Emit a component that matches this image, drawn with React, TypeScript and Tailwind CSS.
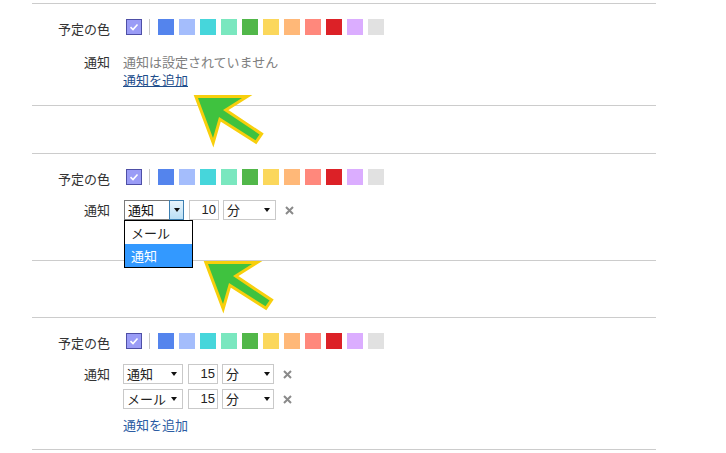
import React from "react";

const swatches = [
  "bg-[#5484ed]",
  "bg-[#a4bdfc]",
  "bg-[#46d6db]",
  "bg-[#7ae7bf]",
  "bg-[#51b749]",
  "bg-[#fbd75b]",
  "bg-[#ffb878]",
  "bg-[#ff887c]",
  "bg-[#dc2127]",
  "bg-[#dbadff]",
  "bg-[#e1e1e1]",
];

function Label({ children, className = "" }: { children: React.ReactNode; className?: string }) {
  return <div className={`w-[78px] shrink-0 text-right text-[13px] text-[#333] ${className}`}>{children}</div>;
}

function Triangle() {
  return <span className="h-0 w-0 border-x-[3.5px] border-t-[4px] border-x-transparent border-t-[#111]" />;
}

function ColorRow() {
  return (
    <div className="flex h-4 items-start">
      <Label className="mt-px leading-[18px]">予定の色</Label>
      <div className="ml-4 flex items-center">
        <div className="flex h-4 w-4 items-center justify-center border border-[#4e4fa6] bg-[#9a9cf6]">
          <svg width="12" height="12" viewBox="0 0 12 12">
            <polyline points="2.5,6.2 5,8.5 9.5,3.5" fill="none" stroke="#fff" strokeWidth="1.6" />
          </svg>
        </div>
        <div className="ml-[7px] h-4 w-px bg-[#c8c8c8]" />
        <div className="ml-2 flex gap-[5px]">
          {swatches.map((c) => (
            <div key={c} className={`h-4 w-4 ${c}`} />
          ))}
        </div>
      </div>
    </div>
  );
}

function Select({ text, width, pr }: { text: string; width: string; pr: string }) {
  return (
    <div className={`flex h-5 items-center justify-between border border-[#c9c9c9] bg-white pl-[3px] ${width} ${pr}`}>
      <span className="text-[13px] leading-[18px] text-[#222]">{text}</span>
      <Triangle />
    </div>
  );
}

function NumberBox({ value }: { value: string }) {
  return (
    <div className="ml-[5px] h-5 w-[30px] border border-[#c9c9c9] bg-white pr-[2px] text-right font-['Liberation_Sans',sans-serif] text-[13px] leading-[18px] text-[#222]">
      {value}
    </div>
  );
}

function RemoveIcon() {
  return (
    <svg className="ml-[9px]" width="9" height="9" viewBox="0 0 9 9">
      <path d="M1 1L8 8M8 1L1 8" stroke="#8a8a8a" strokeWidth="2" />
    </svg>
  );
}

function ReminderRow({ kind, amount, unitWidth }: { kind: string; amount: string; unitWidth: string }) {
  return (
    <div className="flex items-center">
      <Select text={kind} width="w-[60px]" pr="pr-[5px]" />
      <NumberBox value={amount} />
      <div className="ml-1">
        <Select text="分" width={unitWidth} pr="pr-[3px]" />
      </div>
      <RemoveIcon />
    </div>
  );
}

function OpenSelect() {
  return (
    <div className="relative">
      <div className="flex h-5 w-[60px]">
        <div className="flex-1 border-y border-l border-[#7a7a7a] bg-white pl-[3px] text-[13px] leading-[18px] text-[#111]">
          通知
        </div>
        <div className="flex h-5 w-[15px] items-center justify-center border border-[#3c7fb1] bg-linear-to-b from-[#e8f5fd] to-[#b9dff5]">
          <Triangle />
        </div>
      </div>
      <div className="absolute left-0 top-full z-10 w-[69px] border border-black bg-white text-[13px]">
        <div className="h-[23px] pl-[6px] leading-[23px] text-[#222]">メール</div>
        <div className="h-[23px] bg-[#3399ff] pl-[6px] leading-[23px] text-white">通知</div>
      </div>
    </div>
  );
}

function Arrow({ x, y }: { x: number; y: number }) {
  return (
    <g transform={`translate(${x} ${y})`}>
      <polygon
        points="5,4 49,4 30,16 66.5,40.4 62.5,46.2 26,23 20,44"
        fill="#3fc23f"
        stroke="#f8cf0c"
        strokeWidth="6"
        strokeLinejoin="miter"
        strokeMiterlimit="10"
        paintOrder="stroke"
      />
    </g>
  );
}

export default function App() {
  return (
    <div className="relative h-[453px] w-[726px] overflow-hidden bg-white pl-8 pt-[3px] font-['Noto_Sans_CJK_JP',sans-serif]">
      <section className="w-[624px] border-y border-[#cccccc] pb-4 pt-[15px]">
        <ColorRow />
        <div className="mt-[18px] flex">
          <Label className="leading-[18px]">通知</Label>
          <div className="ml-[13px] text-[13px] leading-[18px]">
            <div className="text-[#808080]">通知は設定されていません</div>
            <a className="text-[#1f4e8c] underline">通知を追加</a>
          </div>
        </div>
      </section>

      <section className="mt-[47px] w-[624px] border-y border-[#cccccc] pb-10 pt-[15px]">
        <ColorRow />
        <div className="mt-[15px] flex">
          <Label className="leading-5">通知</Label>
          <div className="ml-[14px] flex items-center">
            <OpenSelect />
            <NumberBox value="10" />
            <div className="ml-1">
              <Select text="分" width="w-[53px]" pr="pr-[5px]" />
            </div>
            <RemoveIcon />
          </div>
        </div>
      </section>

      <section className="mt-[56px] w-[624px] border-y border-[#cccccc] pb-[15px] pt-[15px]">
        <ColorRow />
        <div className="mt-[15px] flex">
          <Label className="leading-5">通知</Label>
          <div className="ml-[13px]">
            <div className="flex flex-col gap-[5px]">
              <ReminderRow kind="通知" amount="15" unitWidth="w-[52px]" />
              <ReminderRow kind="メール" amount="15" unitWidth="w-[52px]" />
            </div>
            <a className="mt-[7px] block text-[13px] leading-[18px] text-[#2b5ca3]">通知を追加</a>
          </div>
        </div>
      </section>

      <svg className="pointer-events-none absolute left-0 top-0" width="726" height="453">
        <Arrow x={193} y={94} />
        <Arrow x={203} y={260} />
      </svg>
    </div>
  );
}
